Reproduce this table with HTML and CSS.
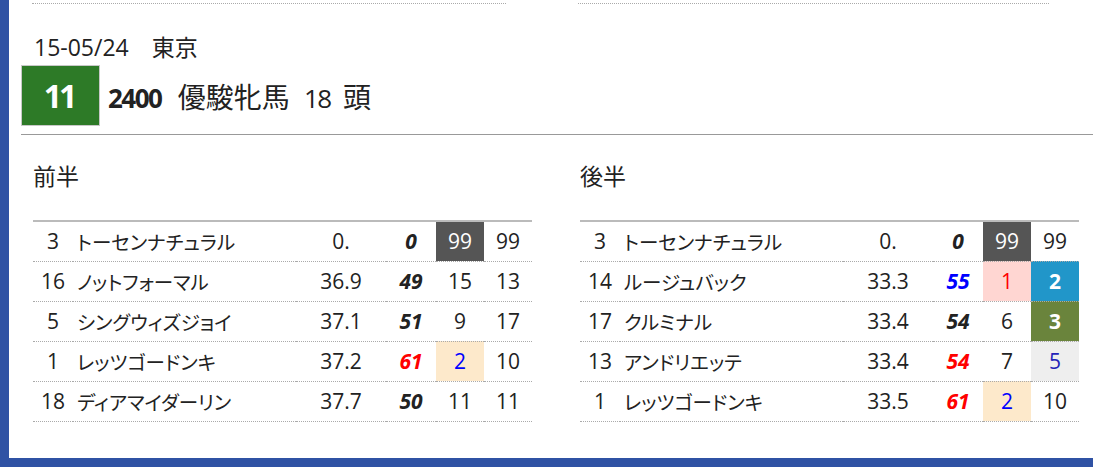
FILE: index.html
```html
<!DOCTYPE html>
<html lang="ja">
<head>
<meta charset="utf-8">
<link rel="stylesheet" href="styles.css">
</head>
<body>
<div class="panel">
  <div class="prev">
    <div class="prev-line left"></div>
    <div class="prev-line right"></div>
  </div>
  <div class="date">15-05/24　東京</div>
  <div class="title-row">
    <div class="race-no">11</div>
    <div class="title"><b class="num">2400</b> <span class="kanji">優駿牝馬</span> <span class="num count">18</span> <span class="kanji unit">頭</span></div>
  </div>
  <div class="rule"></div>
  <div class="halves">
    <section class="half">
      <h2 class="half-title">前半</h2>
      <table class="tbl">
        <tr><td class="no">3</td><td class="name">トーセンナチュラル</td><td class="time">0.</td><td class="rate">0</td><td class="rk dark">99</td><td class="rk">99</td></tr>
        <tr><td class="no">16</td><td class="name">ノットフォーマル</td><td class="time">36.9</td><td class="rate">49</td><td class="rk">15</td><td class="rk">13</td></tr>
        <tr><td class="no">5</td><td class="name">シングウィズジョイ</td><td class="time">37.1</td><td class="rate">51</td><td class="rk">9</td><td class="rk">17</td></tr>
        <tr><td class="no">1</td><td class="name">レッツゴードンキ</td><td class="time">37.2</td><td class="rate red">61</td><td class="rk orange">2</td><td class="rk">10</td></tr>
        <tr><td class="no">18</td><td class="name">ディアマイダーリン</td><td class="time">37.7</td><td class="rate">50</td><td class="rk">11</td><td class="rk">11</td></tr>
      </table>
    </section>
    <section class="half">
      <h2 class="half-title">後半</h2>
      <table class="tbl">
        <tr><td class="no">3</td><td class="name">トーセンナチュラル</td><td class="time">0.</td><td class="rate">0</td><td class="rk dark">99</td><td class="rk">99</td></tr>
        <tr><td class="no">14</td><td class="name">ルージュバック</td><td class="time">33.3</td><td class="rate blue">55</td><td class="rk pink">1</td><td class="rk sky">2</td></tr>
        <tr><td class="no">17</td><td class="name">クルミナル</td><td class="time">33.4</td><td class="rate">54</td><td class="rk">6</td><td class="rk olive">3</td></tr>
        <tr><td class="no">13</td><td class="name">アンドリエッテ</td><td class="time">33.4</td><td class="rate red">54</td><td class="rk">7</td><td class="rk grey">5</td></tr>
        <tr><td class="no">1</td><td class="name">レッツゴードンキ</td><td class="time">33.5</td><td class="rate red">61</td><td class="rk orange">2</td><td class="rk">10</td></tr>
      </table>
    </section>
  </div>
</div>
</body>
</html>
```

FILE: styles.css
```css
html, body {
  margin: 0;
  padding: 0;
}
body {
  background: #2f52a4;
  font-family: "Open Sans", "Noto Sans CJK JP", sans-serif;
  font-feature-settings: "palt";
  color: #222;
  height: 467px;
  overflow: hidden;
}
.panel {
  margin-left: 9px;
  background: #fff;
  height: 458px;
  box-sizing: border-box;
}
.prev {
  display: flex;
  column-gap: 72px;
  padding: 3px 0 0 23px;
}
.prev-line {
  border-top: 1px dotted #aaa;
  height: 0;
}
.prev-line.left { width: 474px; }
.prev-line.right { width: 471px; }
.date {
  margin-top: 28px;
  padding-left: 25px;
  font-size: 23px;
  line-height: 30px;
  color: #222;
}
.title-row {
  display: flex;
  align-items: center;
  margin-top: 3px;
  padding-left: 12px;
}
.race-no {
  width: 77px;
  height: 59px;
  border: 1px solid #c8c8c8;
  background: #2d7a27;
  color: #fff;
  font-weight: 700;
  font-size: 32px;
  letter-spacing: -3px;
  text-indent: -3px;
  display: flex;
  align-items: center;
  justify-content: center;
}
.title {
  margin-left: 8px;
  font-size: 24px;
  line-height: 32px;
  padding-top: 5px;
  color: #222;
  white-space: nowrap;
}
.title .num {
  font-size: 26px;
  letter-spacing: -1.5px;
}
.title b.num { font-weight: 700; }
.title .kanji {
  font-size: 28px;
  margin-left: 10px;
}
.title .count { margin-left: 8px; }
.title .unit { margin-left: 6px; }
.rule {
  margin: 8px 0 0 12px;
  border-top: 1px solid #999;
}
.halves {
  display: grid;
  grid-template-columns: 499px 499px;
  column-gap: 48px;
  padding-left: 24px;
}
.half-title {
  margin: 26px 0 29px 0;
  font-size: 23px;
  line-height: 30px;
  font-weight: 400;
  color: #222;
}
.tbl {
  width: 499px;
  border-collapse: collapse;
  border-top: 2px solid #bbb;
  table-layout: fixed;
  font-size: 21px;
  color: #222;
}
.tbl td {
  box-sizing: border-box;
  height: 40px;
  padding: 0;
  border-bottom: 1px dotted #aaa;
  text-align: center;
  white-space: nowrap;
}
.tbl td.no { width: 40px; }
.tbl td.name { width: 223px; text-align: left; padding-left: 4px; font-size: 19.5px; }
.tbl td.time { width: 90px; }
.tbl td.rate { width: 50px; font-style: italic; font-weight: 700; }
.tbl td.rk { width: 48px; }
.tbl td.rate.red { color: #f00; }
.tbl td.rate.blue { color: #00f; }
.tbl td.dark { background: #555; color: #fff; }
.tbl td.orange { background: #fde9cb; color: #00f; }
.tbl td.pink { background: #ffd6d2; color: #f00; }
.tbl td.sky { background: #2196c9; color: #fff; font-weight: 700; }
.tbl td.olive { background: #6a843c; color: #fff; font-weight: 700; }
.tbl td.grey { background: #eee; color: #2323b8; }
```
